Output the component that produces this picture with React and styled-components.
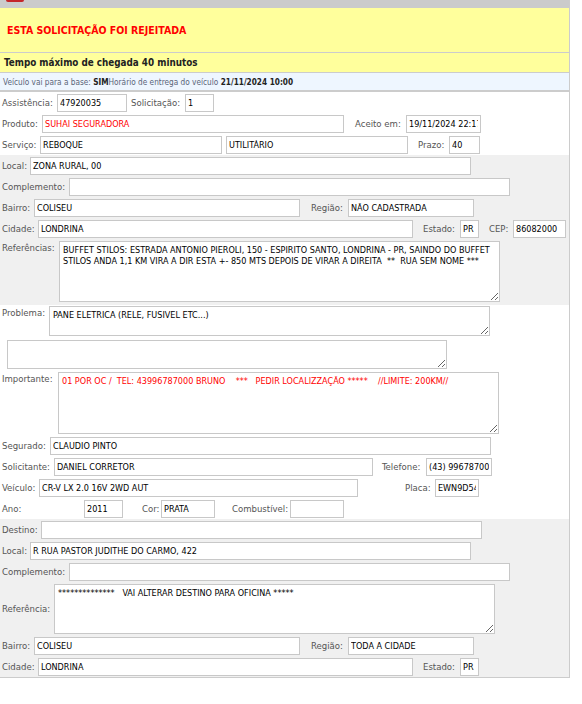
import React from "react";
import styled, { createGlobalStyle } from "styled-components";

const GlobalStyle = createGlobalStyle`
  body {
    margin: 0;
    background: #fff;
    font-family: "DejaVu Sans Condensed", "DejaVu Sans", sans-serif;
    font-stretch: semi-condensed;
  }
`;

const Panel = styled.div`
  width: 570px;
  box-sizing: border-box;
  border-right: 1px solid #ccc;
  border-bottom: 1px solid #ccc;
`;

const TopBar = styled.div`
  height: 8px;
  background: #cbcbcb;
  display: flex;
  padding-left: 6px;
`;

const RedTab = styled.div`
  width: 18px;
  height: 2px;
  background: #c4262a;
  border-radius: 0 0 8px 8px;
`;

const Alert = styled.div`
  height: 44px;
  background: #ffff9c;
  border-bottom: 1px solid #ccc;
  display: flex;
  align-items: center;
  padding-left: 7px;
  color: #f00;
  font-weight: bold;
  font-size: 10.5px;
`;

const Deadline = styled.div`
  height: 19px;
  background: #ffff9c;
  border-bottom: 1px solid #ccc;
  display: flex;
  align-items: center;
  padding-left: 4px;
  color: #222;
  font-weight: bold;
  font-size: 9.8px;
`;

const InfoBar = styled.div`
  height: 17px;
  background: #eef6ff;
  border-bottom: 2px solid #ccc;
  display: flex;
  align-items: center;
  padding-left: 3px;
  font-size: 8.2px;
  color: #5a6478;
  white-space: pre;
`;

const Strong = styled.b`
  color: #222;
`;

const Section = styled.div`
  display: flex;
  flex-direction: column;
  gap: 3px;
  padding: ${(p) => p.$pt}px 0 ${(p) => p.$pb}px 2px;
  background: ${(p) => (p.$gray ? "#f0f0f0" : "#fff")};
`;

const Row = styled.div`
  display: flex;
  align-items: ${(p) => (p.$top ? "flex-start" : "center")};
  margin-top: ${(p) => p.$mt || 0}px;
`;

const Label = styled.span`
  flex: none;
  width: ${(p) => p.$w}px;
  margin-left: ${(p) => p.$ml || 0}px;
  padding-top: ${(p) => p.$pt || 0}px;
  align-self: ${(p) => (p.$center ? "center" : "auto")};
  font-size: 9.5px;
  line-height: 12px;
  color: #555;
  white-space: nowrap;
`;

const Field = styled.input`
  flex: none;
  box-sizing: border-box;
  width: ${(p) => p.$w}px;
  height: 18px;
  margin: 0 0 0 ${(p) => p.$ml || 0}px;
  padding: 0 2px;
  border: 1px solid #c8c8c8;
  border-radius: 0;
  background: #fff;
  font-family: inherit;
  font-stretch: inherit;
  font-size: 9px;
  color: ${(p) => (p.$red ? "#f00" : "#000")};
  outline: none;
`;

const Area = styled.textarea`
  flex: none;
  box-sizing: border-box;
  width: ${(p) => p.$w}px;
  height: ${(p) => p.$h}px;
  margin: 0 0 0 ${(p) => p.$ml || 0}px;
  padding: 3px 3px;
  border: 1px solid #c8c8c8;
  border-radius: 0;
  background: #fff;
  font-family: inherit;
  font-stretch: inherit;
  font-size: 9px;
  line-height: 11px;
  color: ${(p) => (p.$red ? "#f00" : "#000")};
  overflow: hidden;
  outline: none;
  display: block;
`;

const F = (props) => <Field readOnly {...props} />;
const A = (props) => <Area readOnly {...props} />;

export default function App() {
  return (
    <>
      <GlobalStyle />
      <Panel>
        <TopBar>
          <RedTab />
        </TopBar>
        <Alert>ESTA SOLICITAÇÃO FOI REJEITADA</Alert>
        <Deadline>Tempo máximo de chegada 40 minutos</Deadline>
        <InfoBar>
          Veículo vai para a base: <Strong>SIM</Strong>Horário de entrega do veículo{" "}
          <Strong>21/11/2024 10:00</Strong>
        </InfoBar>

        <Section $pt={2} $pb={1}>
          <Row>
            <Label $w={55}>Assistência:</Label>
            <F $w={70} value="47920035" />
            <Label $ml={4} $w={54}>Solicitação:</Label>
            <F $w={29} value="1" />
          </Row>
          <Row>
            <Label $w={40}>Produto:</Label>
            <F $w={302} $red value="SUHAI SEGURADORA" />
            <Label $ml={11} $w={51}>Aceito em:</Label>
            <F $w={75} value="19/11/2024 22:17" />
          </Row>
          <Row>
            <Label $w={38}>Serviço:</Label>
            <F $w={182} value="REBOQUE" />
            <F $ml={4} $w={182} value="UTILITÁRIO" />
            <Label $ml={10} $w={31}>Prazo:</Label>
            <F $w={31} value="40" />
          </Row>
        </Section>

        <Section $gray $pt={2} $pb={3}>
          <Row>
            <Label $w={28}>Local:</Label>
            <F $w={441} value="ZONA RURAL, 00" />
          </Row>
          <Row>
            <Label $w={67}>Complemento:</Label>
            <F $w={441} value="" />
          </Row>
          <Row>
            <Label $w={32}>Bairro:</Label>
            <F $w={266} value="COLISEU" />
            <Label $ml={11} $w={37}>Região:</Label>
            <F $w={126} value="NÃO CADASTRADA" />
          </Row>
          <Row>
            <Label $w={36}>Cidade:</Label>
            <F $w={375} value="LONDRINA" />
            <Label $ml={10} $w={37}>Estado:</Label>
            <F $w={19} value="PR" />
            <Label $ml={10} $w={24}>CEP:</Label>
            <F $w={53} value="86082000" />
          </Row>
          <Row $top>
            <Label $w={57} $pt={1}>Referências:</Label>
            <A
              $w={441}
              $h={61}
              value="BUFFET STILOS: ESTRADA ANTONIO PIEROLI, 150 - ESPIRITO SANTO, LONDRINA - PR, SAINDO DO BUFFET STILOS ANDA 1,1 KM VIRA A DIR ESTA +- 850 MTS DEPOIS DE VIRAR A DIREITA  **  RUA SEM NOME ***"
            />
          </Row>
        </Section>

        <Section $pt={1} $pb={1}>
          <Row $top>
            <Label $w={47} $pt={1}>Problema:</Label>
            <A $w={441} $h={30} value="PANE ELETRICA (RELE, FUSIVEL ETC...)" />
          </Row>
          <Row $mt={1}>
            <A $ml={5} $w={440} $h={29} value="" />
          </Row>
          <Row $top>
            <Label $w={56} $pt={1}>Importante:</Label>
            <A
              $w={441}
              $h={62}
              $red
              value="01 POR OC /  TEL: 43996787000 BRUNO    ***   PEDIR LOCALIZZAÇÃO *****    //LIMITE: 200KM//"
            />
          </Row>
          <Row>
            <Label $w={48}>Segurado:</Label>
            <F $w={441} value="CLAUDIO PINTO" />
          </Row>
          <Row>
            <Label $w={52}>Solicitante:</Label>
            <F $w={319} value="DANIEL CORRETOR" />
            <Label $ml={9} $w={44}>Telefone:</Label>
            <F $w={66} value="(43) 996787000" />
          </Row>
          <Row>
            <Label $w={37}>Veículo:</Label>
            <F $w={319} value="CR-V LX 2.0 16V 2WD AUT" />
            <Label $ml={47} $w={30}>Placa:</Label>
            <F $w={44} value="EWN9D54" />
          </Row>
          <Row>
            <Label $w={82}>Ano:</Label>
            <F $w={39} value="2011" />
            <Label $ml={19} $w={19}>Cor:</Label>
            <F $w={54} value="PRATA" />
            <Label $ml={17} $w={58}>Combustível:</Label>
            <F $w={54} value="" />
          </Row>
        </Section>

        <Section $gray $pt={2} $pb={1}>
          <Row>
            <Label $w={39}>Destino:</Label>
            <F $w={441} value="" />
          </Row>
          <Row>
            <Label $w={28}>Local:</Label>
            <F $w={441} value="R RUA PASTOR JUDITHE DO CARMO, 422" />
          </Row>
          <Row>
            <Label $w={67}>Complemento:</Label>
            <F $w={441} value="" />
          </Row>
          <Row>
            <Label $w={52} $center>Referência:</Label>
            <A
              $w={441}
              $h={50}
              value="**************   VAI ALTERAR DESTINO PARA OFICINA *****"
            />
          </Row>
          <Row>
            <Label $w={32}>Bairro:</Label>
            <F $w={266} value="COLISEU" />
            <Label $ml={11} $w={37}>Região:</Label>
            <F $w={126} value="TODA A CIDADE" />
          </Row>
          <Row>
            <Label $w={36}>Cidade:</Label>
            <F $w={375} value="LONDRINA" />
            <Label $ml={10} $w={37}>Estado:</Label>
            <F $w={19} value="PR" />
          </Row>
        </Section>
      </Panel>
    </>
  );
}
